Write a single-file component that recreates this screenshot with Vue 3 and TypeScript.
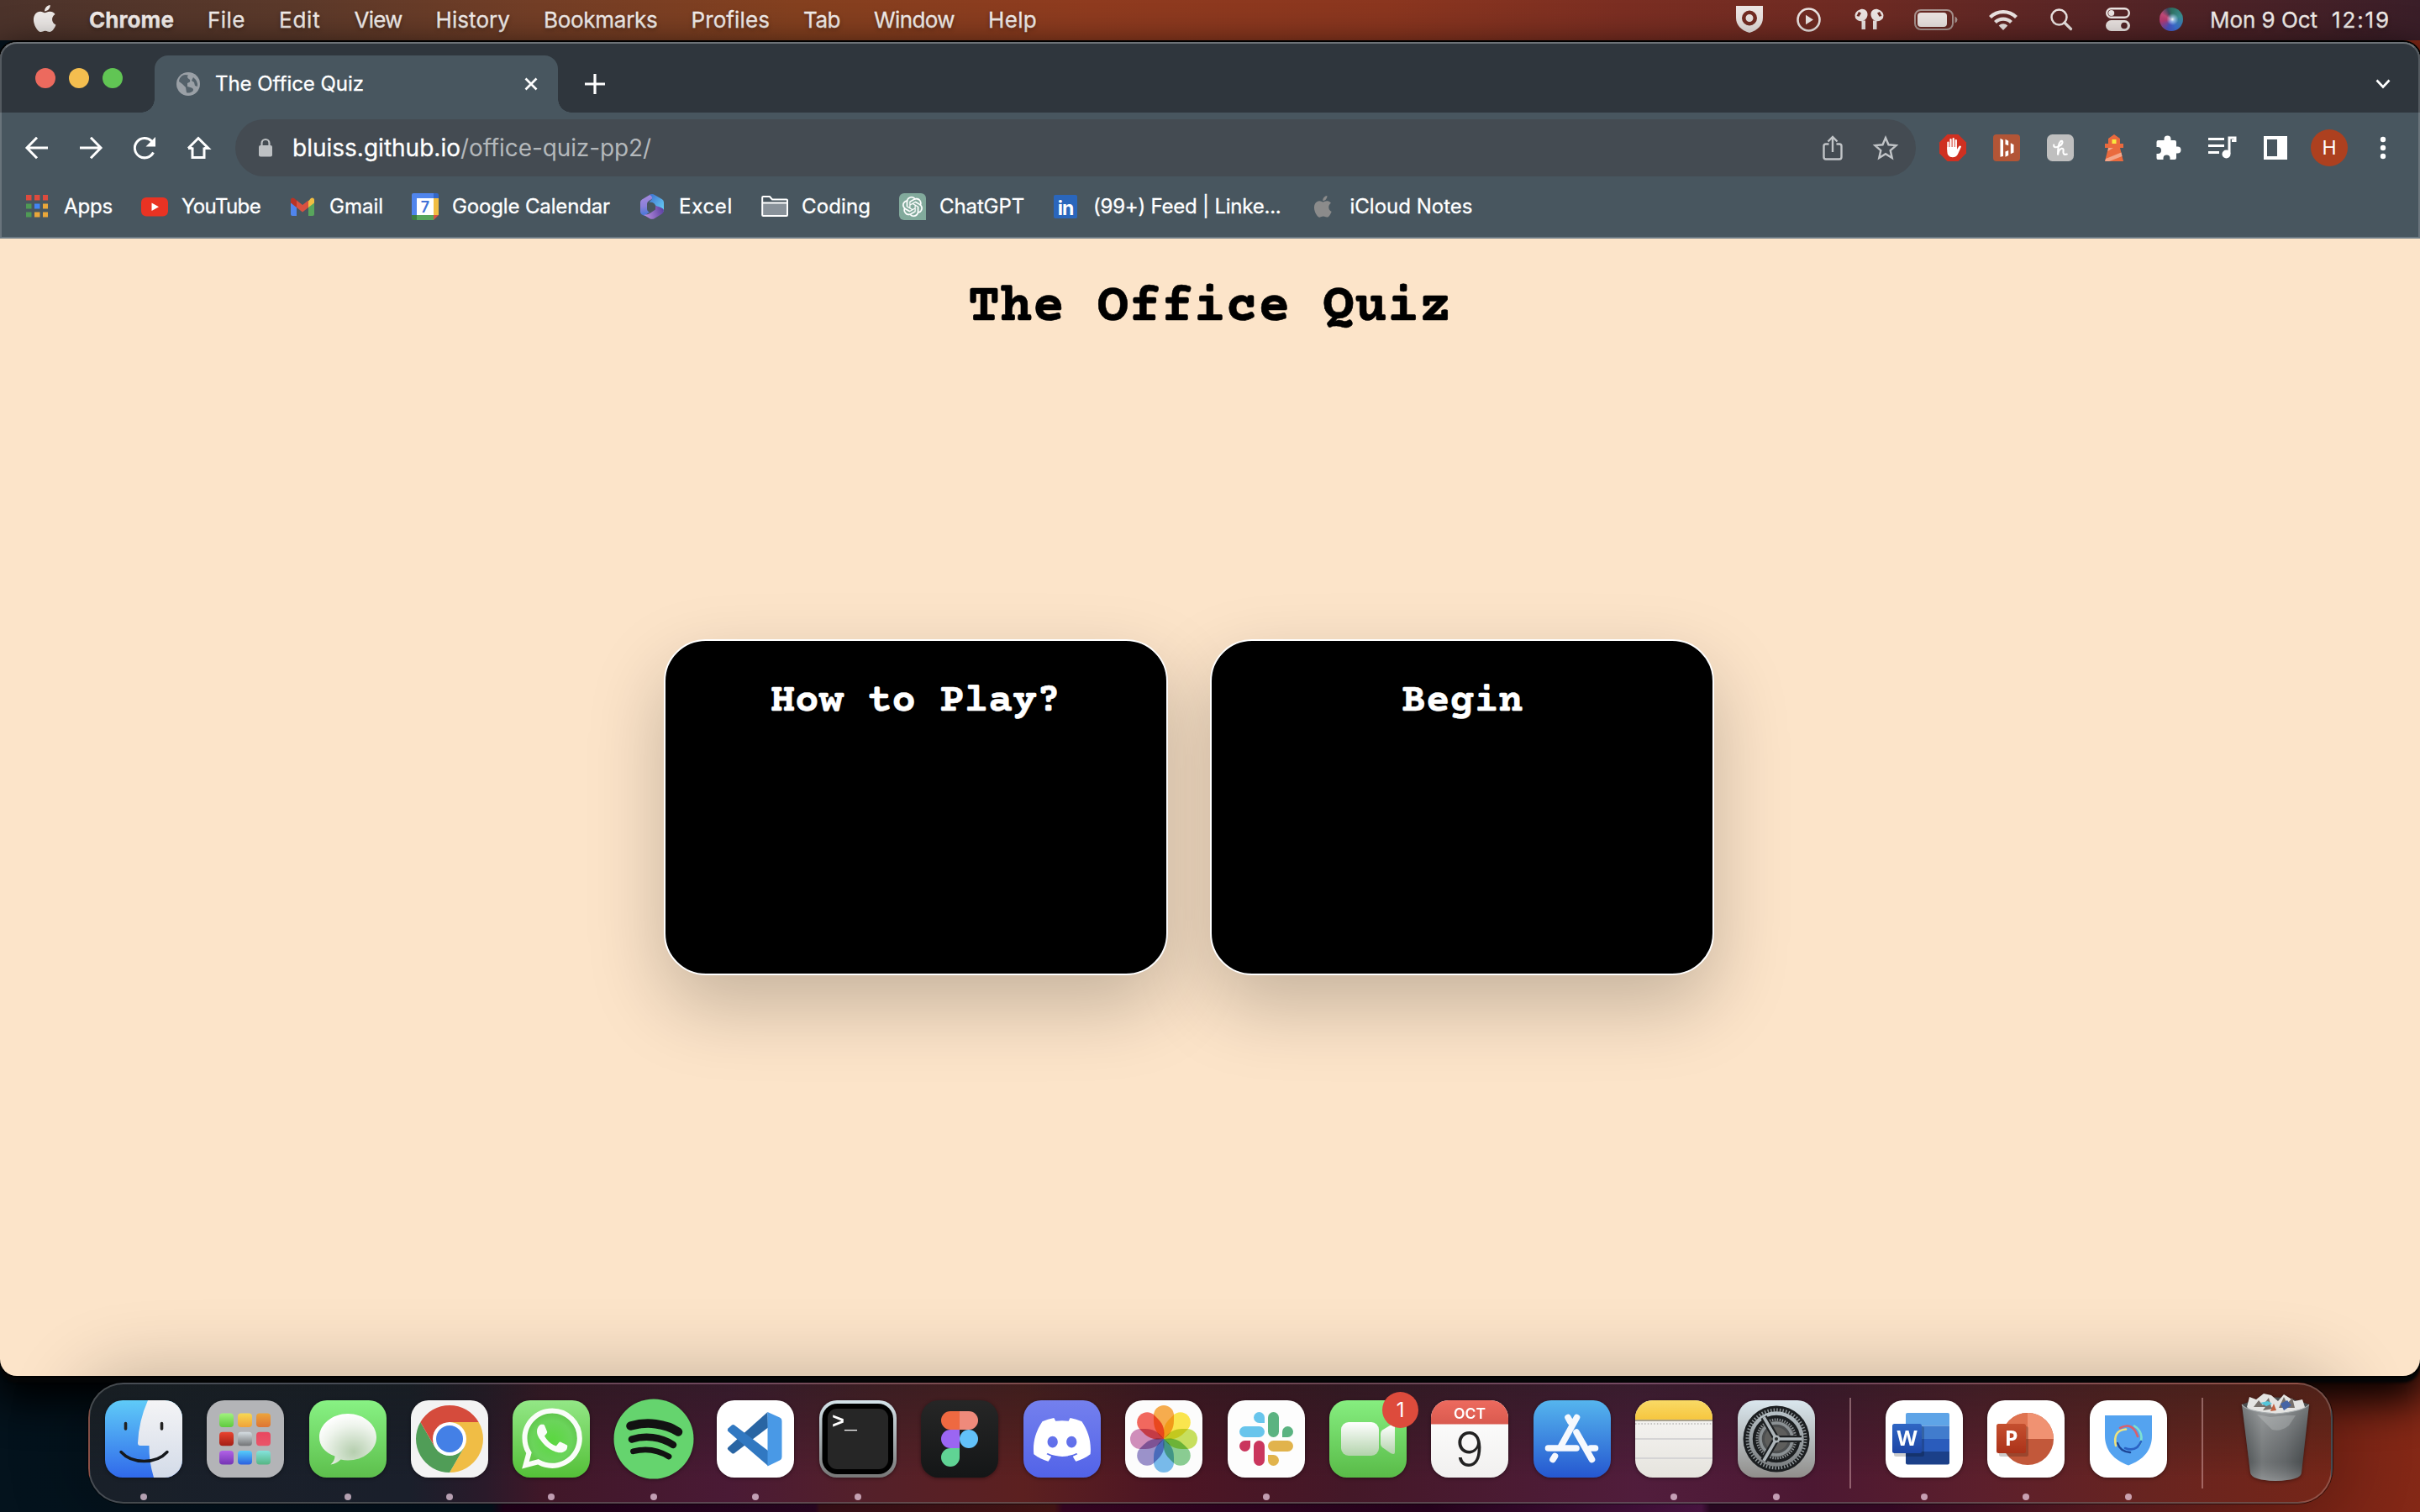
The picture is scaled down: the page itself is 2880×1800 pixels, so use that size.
<script setup lang="ts">
interface Label { text: string; width: number }
interface Bookmark extends Label { icon: string }
interface DockApp { name: string; art: string; running?: boolean; badge?: string }

/* Tracks a label out or in so that it fills the given width. */
const vFit = {
  mounted(el: HTMLElement, binding: { value: number }) {
    const count = (el.textContent ?? '').length || 1
    const natural = el.getBoundingClientRect().width
    el.style.letterSpacing = (binding.value - natural) / count + 'px'
  },
}

const menus: Label[] = [
  { text: 'File', width: 45 },
  { text: 'Edit', width: 49.5 },
  { text: 'View', width: 57 },
  { text: 'History', width: 88.5 },
  { text: 'Bookmarks', width: 135.5 },
  { text: 'Profiles', width: 93.5 },
  { text: 'Tab', width: 44 },
  { text: 'Window', width: 96 },
  { text: 'Help', width: 58 },
]

const apple = 'M18.71 19.5c-.83 1.24-1.71 2.45-3.05 2.47-1.34.03-1.77-.79-3.29-.79-1.53 0-2 .77-3.27.82-1.31.05-2.3-1.32-3.14-2.53C4.25 17 2.94 12.45 4.7 9.39c.87-1.52 2.43-2.48 4.12-2.51 1.28-.02 2.5.87 3.29.87.78 0 2.26-1.07 3.81-.91.65.03 2.47.26 3.64 1.98-.09.06-2.17 1.28-2.15 3.81.03 3.02 2.65 4.03 2.68 4.04-.03.07-.42 1.44-1.38 2.83M13 3.5c.73-.83 1.94-1.46 2.94-1.5.13 1.17-.34 2.35-1.04 3.19-.69.85-1.83 1.51-2.95 1.42-.15-1.15.41-2.35 1.05-3.11z'

const knot = 'M22.2819 9.8211a5.9847 5.9847 0 0 0-.5157-4.9108 6.0462 6.0462 0 0 0-6.5098-2.9A6.0651 6.0651 0 0 0 4.9807 4.1818a5.9847 5.9847 0 0 0-3.9977 2.9 6.0462 6.0462 0 0 0 .7427 7.0966 5.98 5.98 0 0 0 .511 4.9107 6.051 6.051 0 0 0 6.5146 2.9001A5.9847 5.9847 0 0 0 13.2599 24a6.0557 6.0557 0 0 0 5.7718-4.2058 5.9894 5.9894 0 0 0 3.9977-2.9001 6.0557 6.0557 0 0 0-.7475-7.0729zm-9.022 12.6081a4.4755 4.4755 0 0 1-2.8764-1.0408l.1419-.0804 4.7783-2.7582a.7948.7948 0 0 0 .3927-.6813v-6.7369l2.02 1.1686a.071.071 0 0 1 .038.052v5.5826a4.504 4.504 0 0 1-4.4945 4.4944zm-9.6607-4.1254a4.4708 4.4708 0 0 1-.5346-3.0137l.142.0852 4.783 2.7582a.7712.7712 0 0 0 .7806 0l5.8428-3.3685v2.3324a.0804.0804 0 0 1-.0332.0615L9.74 19.9502a4.4992 4.4992 0 0 1-6.1408-1.6464zM2.3408 7.8956a4.485 4.485 0 0 1 2.3655-1.9728V11.6a.7664.7664 0 0 0 .3879.6765l5.8144 3.3543-2.0201 1.1685a.0757.0757 0 0 1-.071 0l-4.8303-2.7865A4.504 4.504 0 0 1 2.3408 7.872zm16.5963 3.8558L13.1038 8.364 15.1192 7.2a.0757.0757 0 0 1 .071 0l4.8303 2.7913a4.4944 4.4944 0 0 1-.6765 8.1042v-5.6772a.79.79 0 0 0-.407-.667zm2.0107-3.0231l-.142-.0852-4.7735-2.7818a.7759.7759 0 0 0-.7854 0L9.409 9.2297V6.8974a.0662.0662 0 0 1 .0284-.0615l4.8303-2.7866a4.4992 4.4992 0 0 1 6.6802 4.66zM8.3065 12.863l-2.02-1.1638a.0804.0804 0 0 1-.038-.0567V6.0742a4.4992 4.4992 0 0 1 7.3757-3.4537l-.142.0805L8.704 5.459a.7948.7948 0 0 0-.3927.6813zm1.0976-2.3654l2.602-1.4998 2.6069 1.4998v2.9994l-2.5974 1.4997-2.6067-1.4997Z'

const bookmarks: Bookmark[] = [
  { text: 'Apps', width: 58, icon: '<g fill="#dd4b3e"><path d="M3 2h6.500v6.500H3zM13 2h6.500v6.500H13zM23 2h6v6.500h-6z"/></g><path d="M3 12.500h6.500v6H3z" fill="#4f9a55"/><path d="M13 12.500h6.500v6H13z" fill="#4285f4"/><path d="M23 12.500h6v6h-6zM13 22.500h6.500v6H13zM23 22.500h6v6h-6z" fill="#eaa73a"/><path d="M3 22.500h6.500v6H3z" fill="#4f9a55"/>' },
  { text: 'YouTube', width: 94, icon: '<rect y="5" width="32" height="22.500" rx="6" fill="#e93323"/><path d="M12.500 11.500v9.500l8.500-4.750z" fill="#fff"/>' },
  { text: 'Gmail', width: 64, icon: '<path d="M2 9v16a2 2 0 0 0 2 2h5V14z" fill="#5085ed"/><path d="M30 9v16a2 2 0 0 1-2 2h-5V14z" fill="#58a55c"/><path d="M23 9.500L26 6c2-1.500 4 0 4 2v3.500L23 17z" fill="#f1bd42"/><path d="M2 8c0-2 2-3.500 4-2l3 2.500V17l-7-5.500z" fill="#b83326"/><path d="M9 8.500l7 5.500 7-5.500V17l-7 5.500L9 17z" fill="#d85140"/>' },
  { text: 'Google Calendar', width: 188, icon: '<path d="M2 0h24v6H0V2q0-2 2-2z" fill="#5085ed"/><path d="M0 6h6v20H0z" fill="#5085ed"/><path d="M26 0h4q2 0 2 2v4h-6z" fill="#3367c8"/><path d="M26 6h6v20h-6z" fill="#f1bd42"/><path d="M0 26h6v6H2q-2 0-2-2z" fill="#3a7d42"/><path d="M6 26h20v6H6z" fill="#58a55c"/><path d="M26 26h6l-6 6z" fill="#d85140"/><path d="M6 6h20v20H6z" fill="#fff"/><text x="16" y="22.500" text-anchor="middle" font-family="Inter, sans-serif" font-size="18" font-weight="600" fill="#4272d7">7</text>' },
  { text: 'Excel', width: 64, icon: '<defs><linearGradient id="xl" x1=".3" y1="0" x2=".4" y2="1"><stop stop-color="#a78ae0"/><stop offset=".55" stop-color="#8a80d8"/><stop offset="1" stop-color="#3f76d8"/></linearGradient><linearGradient id="xt" x1="0" y1="0" x2="1" y2="1"><stop stop-color="#3d6fd0"/><stop offset="1" stop-color="#68d4f6"/></linearGradient><linearGradient id="xb" x1="0" y1=".5" x2="1" y2=".3"><stop stop-color="#b78ee0"/><stop offset="1" stop-color="#5b3fa0"/></linearGradient></defs><path d="M14 1.500L4 7.500Q2 8.700 2 11v11q0 2.500 2 3.500l3 1.500 6-4.500q-3-1-3-4V13q0-3 4-5l4-3z" fill="url(#xl)"/><path d="M13 2q3-2 6 0l9 5.300q2 1.200 2 3.700v11L20 14.500Q18 10 12.500 11q1-2 3-3.500 2-3-2.500-5.500z" fill="url(#xt)"/><path d="M30 20q0 3-2 4.500l-9 5.500q-3 1.700-6 0l-7-4.200q5 .2 8-2.300l6-4V15q9 2 10 5z" fill="url(#xb)"/>' },
  { text: 'Coding', width: 82, icon: '<path d="M2 11h28v16H2z" fill="#89929a"/><path d="M2 9h28v3H2z" fill="#48565f"/><path d="M1.200 5q0-1 1-1H10l3 3.500h17q1 0 1 1V26q0 1-1 1H2.200q-1 0-1-1zM1.200 11.500h29.600" fill="none" stroke="#fff" stroke-width="2"/>' },
  { text: 'ChatGPT', width: 101, icon: '<path d="M6 0h20a6 6 0 0 1 6 6v26H6a6 6 0 0 1-6-6V6a6 6 0 0 1 6-6z" fill="#82aa9c"/><path transform="translate(4 4)" fill="#fff" stroke="#fff" stroke-width=".2" d="' + knot + '"/>' },
  { text: '(99+) Feed | Linke...', width: 223.5, icon: '<rect x="1" y="2" width="28" height="28" rx="2" fill="#2a66bc"/><text x="15" y="26" text-anchor="middle" font-family="Inter, sans-serif" font-size="23" font-weight="700" letter-spacing="-1" fill="#fff">in</text>' },
  { text: 'iCloud Notes', width: 146, icon: '<path transform="translate(0 .500) scale(1.280)" fill="#8b8b8b" d="' + apple + '"/>' },
]

const squircle = (fill: string, extra = ''): string =>
  `<rect width="92" height="92" rx="21" fill="${fill}" ${extra}/>`

const grad = (id: string, a: string, b: string): string =>
  `<linearGradient id="${id}" x1="0" y1="0" x2="0" y2="1"><stop stop-color="${a}"/><stop offset="1" stop-color="${b}"/></linearGradient>`

const padColors: [string, string][] = [
  ['#a0f27e', '#5fca3f'], ['#f8d851', '#efa23a'], ['#eda43a', '#dd7434'],
  ['#e9432f', '#a31f16'], ['#d5dde2', '#727476'], ['#e9475f', '#e9556a'],
  ['#b162e6', '#7434b4'], ['#55ccfb', '#2b5fe0'], ['#84e3dc', '#55b583'],
]
const launchpad = padColors.map(([a, b], i) =>
  `${grad('pad' + i, a, b)}<rect x="${15 + (i % 3) * 22}" y="${15.5 + Math.floor(i / 3) * 22.3}" width="17" height="16.500" rx="4" fill="url(#pad${i})"/>`).join('')

const petals = ['#f5a53f', '#fae33f', '#c2dc50', '#80c889', '#6db4e8', '#9289c6', '#cb84b4', '#f05b50']
  .map((c, i) => `<path transform="rotate(${i * 45} 46 46)" d="M46 46C38 40 34 34 34 24V18a12 12 0 0 1 24 0V24C58 34 54 40 46 46z" fill="${c}" fill-opacity=".92" style="mix-blend-mode:multiply"/>`).join('')

const whatsapp = 'M17.472 14.382c-.297-.149-1.758-.867-2.03-.967-.273-.099-.471-.148-.67.15-.197.297-.767.966-.94 1.164-.173.199-.347.223-.644.075-.297-.15-1.255-.463-2.39-1.475-.883-.788-1.48-1.761-1.653-2.059-.173-.297-.018-.458.13-.606.134-.133.298-.347.446-.52.149-.174.198-.298.298-.497.099-.198.05-.371-.025-.52-.075-.149-.669-1.612-.916-2.207-.242-.579-.487-.5-.669-.51-.173-.008-.371-.01-.57-.01-.198 0-.52.074-.792.372-.272.297-1.04 1.016-1.04 2.479 0 1.462 1.065 2.875 1.213 3.074.149.198 2.096 3.2 5.077 4.487.709.306 1.262.489 1.694.625.712.227 1.36.195 1.871.118.571-.085 1.758-.719 2.006-1.413.248-.694.248-1.289.173-1.413-.074-.124-.272-.198-.57-.347m-5.421 7.403h-.004a9.87 9.87 0 01-5.031-1.378l-.361-.214-3.741.982.998-3.648-.235-.374a9.86 9.86 0 01-1.51-5.26c.001-5.45 4.436-9.884 9.888-9.884 2.64 0 5.122 1.03 6.988 2.898a9.825 9.825 0 012.893 6.994c-.003 5.45-4.437 9.884-9.885 9.884m8.413-18.297A11.815 11.815 0 0012.05 0C5.495 0 .16 5.335.157 11.892c0 2.096.547 4.142 1.588 5.945L.057 24l6.305-1.654a11.882 11.882 0 005.683 1.448h.005c6.554 0 11.89-5.335 11.893-11.893a11.821 11.821 0 00-3.48-8.413Z'

const discord = 'M20.317 4.3698a19.7913 19.7913 0 00-4.8851-1.5152.0741.0741 0 00-.0785.0371c-.211.3753-.4447.8648-.6083 1.2495-1.8447-.2762-3.68-.2762-5.4868 0-.1636-.3933-.4058-.8742-.6177-1.2495a.077.077 0 00-.0785-.037 19.7363 19.7363 0 00-4.8852 1.515.0699.0699 0 00-.0321.0277C.5334 9.0458-.319 13.5799.0992 18.0578a.0824.0824 0 00.0312.0561c2.0528 1.5076 4.0413 2.4228 5.9929 3.0294a.0777.0777 0 00.0842-.0276c.4616-.6304.8731-1.2952 1.226-1.9942a.076.076 0 00-.0416-.1057c-.6528-.2476-1.2743-.5495-1.8722-.8923a.077.077 0 01-.0076-.1277c.1258-.0943.2517-.1923.3718-.2914a.0743.0743 0 01.0776-.0105c3.9278 1.7933 8.18 1.7933 12.0614 0a.0739.0739 0 01.0785.0095c.1202.099.246.1981.3728.2924a.077.077 0 01-.0066.1276 12.2986 12.2986 0 01-1.873.8914.0766.0766 0 00-.0407.1067c.3604.698.7719 1.3628 1.225 1.9932a.076.076 0 00.0842.0286c1.961-.6067 3.9495-1.5219 6.0023-3.0294a.077.077 0 00.0313-.0552c.5004-5.177-.8382-9.6739-3.5485-13.6604a.061.061 0 00-.0312-.0286zM8.02 15.3312c-1.1825 0-2.1569-1.0857-2.1569-2.419 0-1.3332.9555-2.4189 2.157-2.4189 1.2108 0 2.1757 1.0952 2.1568 2.419 0 1.3332-.9555 2.4189-2.1569 2.4189zm7.9748 0c-1.1825 0-2.1569-1.0857-2.1569-2.419 0-1.3332.9554-2.4189 2.1569-2.4189 1.2108 0 2.1757 1.0952 2.1568 2.419 0 1.3332-.946 2.4189-2.1568 2.4189Z'

const dockApps: DockApp[] = [
  { name: 'finder', running: true, art: grad('fb', '#5fcbf8', '#3069ea') + grad('fw', '#f4f4f6', '#d3dbe8')
    + '<clipPath id="fc"><rect width="92" height="92" rx="21"/></clipPath><g clip-path="url(#fc)"><path d="M0 0h92v92H0z" fill="url(#fb)"/><path d="M51 0Q40 25 39 51q0 3 3 3h10.500Q52 72 58 92h34V0z" fill="url(#fw)"/></g><path d="M24.500 27.500v6.500M67.500 27.500v6.500" stroke="#222" stroke-width="3.600" stroke-linecap="round"/><path d="M19 61.500Q29 72.500 46.500 72.500T74 61.500" fill="none" stroke="#15181c" stroke-width="3.400" stroke-linecap="round"/>' },
  { name: 'launchpad', art: squircle('#b3b4b7') + launchpad },
  { name: 'messages', running: true, art: grad('ms', '#88f284', '#5dbf4c') + '<radialGradient id="mb" cx=".6" cy=".75" r=".75"><stop stop-color="#b5ceae"/><stop offset=".7" stop-color="#eef4ec"/><stop offset="1" stop-color="#fff"/></radialGradient>' + squircle('url(#ms)') + '<path d="M46 16c18.500 0 34 12.500 34 28S64.500 71.500 46 71.500q-4.500 0-8.500-1-5 5-12 6 5-4.500 5-10C18 62 12 54 12 44c0-15.500 15.500-28 34-28z" fill="url(#mb)"/>' },
  { name: 'chrome', running: true, art: squircle('#f3f3f3') + '<path d="M80.640 26A40 40 0 0 1 46 86L63.320 56L46 26z" fill="#f0bd45"/><path d="M11.360 26A40 40 0 0 0 46 86L63.320 56H28.680z" fill="#509d57"/><path d="M80.640 26A40 40 0 0 0 11.360 26L28.680 56L46 26z" fill="#d54b3c"/><circle cx="46" cy="46" r="20" fill="#fff"/><circle cx="46" cy="46" r="16" fill="#4480e6"/>' },
  { name: 'whatsapp', running: true, art: '<radialGradient id="wg" cy=".55" r=".65"><stop stop-color="#5ad83f"/><stop offset=".6" stop-color="#6bd45b"/><stop offset="1" stop-color="#58bd43"/></radialGradient>' + grad('wl', '#93e786', '#54c038') + squircle('url(#wl)') + '<circle cx="47" cy="45" r="30" fill="url(#wg)"/><path transform="translate(11 9.500) scale(3)" fill="#fafdf9" d="' + whatsapp + '"/>' },
  { name: 'spotify', running: true, art: '<circle cx="46" cy="46" r="47.500" fill="#65d46e"/><g fill="none" stroke="#121212" stroke-linecap="round"><path d="M18.500 30.500C38 25 60 27.500 75 37.500" stroke-width="10.500"/><path d="M20 46.500C36 41.500 54 43.500 69 53" stroke-width="8.500"/><path d="M21.500 60.800C36 57 51 59 64 67" stroke-width="6.800"/></g>' },
  { name: 'vscode', running: true, art: squircle('#fff') + '<path d="M60.500 14L13.500 56q-1.500 1.500 0 3l4.500 4q1.500 1 3 0L61 32.500z" fill="#2965a3"/><path d="M13.500 33.500l4.500-4q1.500-1 3 0L61 60v18L13.500 37q-1.500-1.500 0-3.500z" fill="#3178c1"/><path d="M60.500 14L75 20.500q2.500 1.200 2.500 4v43q0 3-2.500 4L60.500 78.500z" fill="#4999e6"/>' },
  { name: 'terminal', running: true, art: grad('tf', '#d4e3ea', '#777') + squircle('url(#tf)') + '<rect x="3.500" y="4" width="84.500" height="84" rx="18" fill="#000"/><rect x="10" y="10" width="72" height="72" rx="11" fill="#262626"/><text x="15" y="32.500" font-family="Liberation Mono, monospace" font-weight="700" font-size="25" fill="#fff">&gt;_</text>' },
  { name: 'figma', art: grad('fg', '#262626', '#141617') + squircle('url(#fg)') + '<path d="M46 13H35a11 11 0 0 0 0 22h11z" fill="#ee6941"/><path d="M46 13h11a11 11 0 0 1 0 22H46z" fill="#ef8a7b"/><path d="M46 35H35a11 11 0 0 0 0 22h11z" fill="#9b66f2"/><circle cx="57" cy="46" r="11" fill="#62c1f9"/><path d="M46 57H35a11 11 0 1 0 11 11z" fill="#60d394"/>' },
  { name: 'discord', art: grad('dg', '#7480ee', '#5263e8') + squircle('url(#dg)') + '<path transform="translate(12 13) scale(2.830)" fill="#fff" d="' + discord + '"/>' },
  { name: 'photos', art: squircle('#fcfcfc') + '<g style="isolation:isolate">' + petals + '</g>' },
  { name: 'slack', running: true, art: squircle('#fdfdfd') + '<g fill="#68c5ec"><rect x="14" y="31" width="30" height="13" rx="6.500"/><path d="M44 27h-6.500a6.500 6.500 0 1 1 6.500-6.500z"/></g><g fill="#5bb381"><rect x="48" y="14" width="13" height="30" rx="6.500"/><path d="M65 44v-6.500a6.500 6.500 0 1 1 6.500 6.500z"/></g><g fill="#ca365d"><rect x="31" y="48" width="13" height="30" rx="6.500"/><path d="M27 48v6.500A6.500 6.500 0 1 1 20.500 48z"/></g><g fill="#e1b34c"><rect x="48" y="48" width="30" height="13" rx="6.500"/><path d="M48 65h6.500a6.500 6.500 0 1 1-6.500 6.500z"/></g>' },
  { name: 'facetime', badge: '1', art: grad('ft', '#86ee80', '#59bb48') + grad('fv', '#ffffff', '#b3d3ac') + squircle('url(#ft)') + '<rect x="14" y="26" width="45" height="40" rx="9" fill="url(#fv)"/><path d="M61 40q0-3 2-4.500l10-6q5-2 5 1.500v31q0 3.500-5 1L63 56q-2-1.500-2-4z" fill="url(#fv)"/>' },
  { name: 'calendar', art: '<clipPath id="cc"><rect width="92" height="92" rx="21"/></clipPath>' + grad('cr', '#ed6a5e', '#d95a4f') + grad('cw', '#ffffff', '#f1f0ef') + '<g clip-path="url(#cc)"><path d="M0 0h92v92H0z" fill="url(#cw)"/><path d="M0 0h92v28.500H0z" fill="url(#cr)"/></g><text x="46" y="22" text-anchor="middle" font-family="Inter, sans-serif" font-size="17.500" font-weight="600" fill="#fff">OCT</text><text x="46" y="78.500" text-anchor="middle" font-family="Inter, sans-serif" font-size="57" font-weight="300" fill="#222">9</text>' },
  { name: 'appstore', art: grad('as', '#55b5ee', '#2557d0') + squircle('url(#as)') + '<g fill="none" stroke="#f6f9fe" stroke-width="7.600" stroke-linecap="round"><path d="M17.500 57H51M73.500 57H68"/><path d="M51.500 20.500L33 54M41 20.500l3 5.500"/><path d="M25.500 66.500L23 70.500"/><path d="M51 38l18.500 32.500"/></g>' },
  { name: 'notes', running: true, art: '<clipPath id="nc"><rect width="92" height="92" rx="21"/></clipPath>' + grad('ny', '#f9da66', '#f6c63f') + grad('nw', '#f8f7f6', '#e6e4de') + '<g clip-path="url(#nc)"><path d="M0 0h92v92H0z" fill="url(#nw)"/><path d="M0 0h92v23H0z" fill="url(#ny)"/><path d="M0 24h92" stroke="#a9a18c" stroke-width="2"/><path d="M0 28h92" stroke="#c4c3c1" stroke-width="2" stroke-dasharray="1.500 2.200"/><path d="M0 46h92M0 69h92" stroke="#d5d4d5" stroke-width="2"/></g>' },
  { name: 'settings', running: true, art: grad('st', '#dae7ee', '#908e8b') + grad('sr', '#b5bfc4', '#7e8284') + squircle('url(#st)') + '<circle cx="46" cy="46" r="39.500" fill="#1b1e20"/><circle cx="46" cy="46" r="34.500" fill="none" stroke="#8f9699" stroke-width="4" stroke-dasharray="1.500 2.112"/><circle cx="46" cy="46" r="30.500" fill="none" stroke="url(#sr)" stroke-width="4.500"/><circle cx="46" cy="46" r="22" fill="#4c4e4f"/><circle cx="46" cy="46" r="23" fill="none" stroke="#8c9194" stroke-width="3" stroke-dasharray="1.500 1.511"/><circle cx="46" cy="46" r="19" fill="none" stroke="#8b9194" stroke-width="3.500"/><circle cx="46" cy="46" r="14" fill="#5e5e5c"/><path d="M46 46H76M46 46L31 20M46 46L31 72" stroke="#1c1f21" stroke-width="8"/><path d="M46 46H76M46 46L31 20M46 46L31 72" stroke="#adb5b9" stroke-width="3.600"/><circle cx="46" cy="46" r="4.500" fill="#adb5b9"/><circle cx="46" cy="46" r="2" fill="#2a2d2f"/>' },
]

const officeApps: DockApp[] = [
  { name: 'word', running: true, art: squircle('#fff') + '<path d="M26 15h48q2 0 2 2v13.500H24V17q0-2 2-2z" fill="#5ea4e7"/><path d="M24 30.500h52V46H24z" fill="#417ccd"/><path d="M24 46h52v15H24z" fill="#2a5cbc"/><path d="M24 61h52v13.500q0 2-2 2H26q-2 0-2-2z" fill="#1b4089"/><rect x="10" y="31" width="36" height="36" rx="2.500" fill="#000" opacity=".2"/>' + grad('wb', '#2f66c4', '#1d45a5') + '<rect x="8" y="28" width="35" height="35" rx="2.500" fill="url(#wb)"/><text x="25.500" y="54" text-anchor="middle" font-family="Open Sans, sans-serif" font-size="25" font-weight="700" fill="#fff">W</text>' },
  { name: 'powerpoint', running: true, art: squircle('#fff') + '<circle cx="48" cy="46" r="31" fill="#c2583a"/><path d="M48 15a31 31 0 0 1 31 31H48z" fill="#f09272"/><path d="M48 15a31 31 0 0 0-31 31h31z" fill="#df7350"/><rect x="14" y="31" width="35" height="36" rx="2.500" fill="#000" opacity=".2"/>' + grad('pb', '#c5502f', '#ab3219') + '<rect x="11" y="28" width="35" height="35" rx="2.500" fill="url(#pb)"/><text x="28.500" y="54" text-anchor="middle" font-family="Open Sans, sans-serif" font-size="25" font-weight="700" fill="#fff">P</text>' },
  { name: 'hotspot', running: true, art: squircle('#fff') + '<path d="M18 18h56v24c0 17-10 29-28 35.500C28 71 18 59 18 42z" fill="#54a3f0"/><g fill="none" stroke-width="2.600" stroke-linecap="round"><path d="M36 33Q51 25 57 43" stroke="#d9606c"/><path d="M53 30.500Q66 39 59 54" stroke="#7ce0d2"/><path d="M61 49Q56 62 42 57" stroke="#2a62c4"/><path d="M33 51Q36 61 48 62" stroke="#1d4696"/><path d="M31 54Q27 36 43 34.500" stroke="#eee27e"/></g>' },
]

const trash: string = '<linearGradient id="tg"><stop stop-color="#555b5e"/><stop offset=".3" stop-color="#8e9395"/><stop offset=".65" stop-color="#777c7f"/><stop offset="1" stop-color="#4c5255"/></linearGradient><linearGradient id="td" x1="0" y1="0" x2="0" y2="1"><stop stop-color="#bcbcbc" stop-opacity=".35"/><stop offset=".75" stop-color="#222" stop-opacity=".25"/><stop offset="1" stop-color="#999" stop-opacity=".4"/></linearGradient><path d="M6 5Q46-12 86 5L84 15H8z" fill="#4c4f51"/><path d="M12 8l3-12 8 3 9-7 9 2 8 7 7-8 8 5 5 3 9-2 4 12-10 6H20z" fill="#e4e4e2"/><path d="M20 8l6-8 5 6 7-9 3 11zM50 9l6-13 4 8 6-7 3 12zM31 12l5-7 8 5z" fill="#77706b"/><path d="M28 3l9-2 5 3-7 3z" fill="#54c6da"/><path d="M52 4l8-4 5 6-9 6z" fill="#4464a5"/><path d="M40 13l4-9 3 8z" fill="#c0603f"/><path d="M6 5q4 8 40 11Q80 13 86 5l-9 81q0 9-31 10-29-1-30-10z" fill="url(#tg)"/><path d="M6 5q4 8 40 11Q80 13 86 5l-9 81q0 9-31 10-29-1-30-10z" fill="url(#td)"/><path d="M24 17l16 3 18-2 12 0-8 12q-10 8-20 5z" fill="#d5d8d9" opacity=".28"/><path d="M6 5q4 8 40 11Q80 13 86 5" fill="none" stroke="#a8adaf" stroke-width="1.200"/>'
</script>

<template>
  <div class="desktop">
    <header class="menubar">
      <svg class="apple" viewBox="3.9 2 15.9 20" preserveAspectRatio="none"><path :d="apple" /></svg>
      <nav class="menus">
        <span class="app-name" v-fit="101">Chrome</span>
        <span v-for="m in menus" :key="m.text" v-fit="m.width">{{ m.text }}</span>
      </nav>
      <div class="status">
        <svg width="32" height="32" viewBox="0 0 32 32"><path fill-rule="evenodd" d="M0 0h32v14c0 9-6 15-16 18C6 29 0 23 0 14zM16 5.500a9 9 0 1 0 0 18 9 9 0 0 0 0-18zm0 4.500a4.500 4.500 0 1 1 0 9 4.500 4.500 0 0 1 0-9z" /></svg>
        <svg class="s-play" width="29" height="29" viewBox="0 0 29 29"><circle cx="14.500" cy="14.500" r="13" fill="none" stroke="#ece5e3" stroke-width="2.600" /><path d="M11 8.800v11.400l9-5.700z" /></svg>
        <svg class="s-pods" width="35" height="26" viewBox="0 0 35 26"><path fill-rule="evenodd" d="M7.500 1C12 0 16 3 15.500 8q-.5 5-5.500 7-6 1-9-3.500Q-1.500 4 7.500 1zM5 4L2.500 9l3 .8L8 5.500z" /><path fill-rule="evenodd" d="M27.500 1C23 0 19 3 19.500 8q.5 5 5.500 7 6 1 9-3.500Q36.500 4 27.500 1zM30 4l2.500 5-3 .8L27 5.500z" /><path d="M8.500 14.500h4.500V25H8.500zM22 14.500h4.500V25H22z" /></svg>
        <svg class="s-batt" width="52" height="25" viewBox="0 0 52 25"><rect x="1" y="1" width="45" height="23" rx="7" fill="none" stroke="#a8938f" stroke-width="2" /><rect x="4" y="4" width="35" height="17" rx="4" /><path d="M48.500 8.500q3 1.500 3 4t-3 4z" fill="#a8938f" /></svg>
        <svg class="s-wifi" width="34" height="25" viewBox="0 0 34 25"><g fill="none" stroke="#ece5e3" stroke-width="4.200"><path d="M1.500 9.500a22 22 0 0 1 31 0" /><path d="M7.500 15.500a13.500 13.500 0 0 1 19 0" /></g><path d="M17 25l-5.300-5.600a7.500 7.500 0 0 1 10.600 0z" /></svg>
        <svg class="s-find" width="26" height="26" viewBox="0 0 26 26"><circle cx="10.500" cy="10.500" r="9" fill="none" stroke="#ece5e3" stroke-width="2.500" /><path d="M17 17l7.500 7.500" stroke="#ece5e3" stroke-width="3.200" stroke-linecap="round" /></svg>
        <svg class="s-ctrl" width="29" height="28" viewBox="0 0 29 28"><rect x="1.200" y="1.200" width="26.600" height="10.600" rx="5.300" fill="none" stroke="#ece5e3" stroke-width="2.400" /><circle cx="6.700" cy="6.500" r="3.500" /><rect y="15" width="29" height="13" rx="6.500" /><circle cx="22" cy="21.500" r="3.800" fill="#542528" /></svg>
        <i class="siri"></i>
        <span class="date" v-fit="128">Mon 9 Oct</span>
        <span v-fit="70">12:19</span>
      </div>
    </header>

    <main class="window">
      <div class="chrome">
        <div class="tabstrip">
          <div class="lights"><i class="red"></i><i class="yellow"></i><i class="green"></i></div>
          <div class="tab">
            <svg class="globe" width="28" height="28" viewBox="0 0 28 28"><circle cx="14" cy="14" r="14" fill="#9aa0a6" /><path d="M14 3.500q-2 2 0 4 3 1 2 4l-3 1.500v4l5 1.500q3 1 1.500 4L17 24q-3 1-5 .3l-1-6.300-4-4-4-3q0-4 4-7 3-1.500 7-.5zM20 6l-2 4 3 2 1 4 3 1q1-6-5-11z" fill="#48565f" opacity=".85" /></svg>
            <span v-fit="177">The Office Quiz</span>
            <svg class="close" width="16" height="16" viewBox="0 0 16 16"><path d="M1.500 1.500l13 13M14.500 1.500l-13 13" stroke="#fff" stroke-width="2.700" /></svg>
          </div>
          <svg class="plus" width="24" height="24" viewBox="0 0 24 24"><path d="M12 0v24M0 12h24" stroke="#fff" stroke-width="3.200" /></svg>
          <svg class="more-tabs" width="18" height="12" viewBox="0 0 18 12"><path d="M1.500 1.500L9 9.500l7.500-8" fill="none" stroke="#fff" stroke-width="2.600" /></svg>
        </div>

        <div class="toolbar">
          <div class="nav">
            <svg viewBox="0 0 28 28"><path d="M27 14H3M14 1.800L2 14l12 12.200" /></svg>
            <svg viewBox="0 0 28 28"><path d="M1 14h24M14 1.800L26 14 14 26.200" /></svg>
            <svg viewBox="0 0 28 28"><path d="M24.500 19.500A11.700 11.700 0 1 1 22.500 6l2 2.200" /><path d="M27 1v11.500H15.500z" class="solid" /></svg>
            <svg viewBox="0 0 28 28"><path d="M7 13.500V25.500h14V13.500M2 14.500L14 2.500l12 12H21M2 14.500h5" /></svg>
          </div>
          <div class="omnibox">
            <svg class="lock" width="16" height="22" viewBox="0 0 16 22"><path d="M3.500 9V5.500a4.500 4.500 0 0 1 9 0V9" fill="none" stroke="#bdc0c3" stroke-width="2.200" /><rect y="8" width="16" height="13.500" rx="2" fill="#bdc0c3" /></svg>
            <span class="host" v-fit="200">bluiss.github.io</span><span class="path" v-fit="227">/office-quiz-pp2/</span>
            <svg class="share" width="24" height="30" viewBox="0 0 24 30"><path d="M7.500 10.500H4q-2.500 0-2.500 2.500v13q0 2.500 2.500 2.500h16q2.500 0 2.500-2.500V13q0-2.500-2.500-2.500h-3.500M12 20V2.500M6.500 7.500L12 2l5.500 5.500" /></svg>
            <svg width="30" height="30" viewBox="0 0 30 30"><path d="M15 3l3.500 8.300 9 .8-6.800 6 2 8.800-7.700-4.700-7.700 4.700 2-8.800-6.800-6 9-.8z" /></svg>
          </div>
          <div class="extensions">
            <svg viewBox="0 0 32 32"><path d="M9.500 0h13L32 9.500v13L22.500 32h-13L0 22.500v-13z" fill="#cf3021" /><path d="M10.400 9.500V18M13.500 6v11M16.700 5.200V17M19.800 7v11" fill="none" stroke="#fff" stroke-width="2.200" stroke-linecap="round" /><path d="M9.300 15h11.600v3l2.200-3.600q1.500-1.700 3 .2L22 23.500Q20.500 27.200 15.700 27.200q-6.400-.4-6.400-7z" fill="#fff" /></svg>
            <svg viewBox="0 0 32 32"><rect width="32" height="32" rx="4" fill="#b25536" /><path d="M8.500 4.800l3.500 2V26l-3.500.8zM14.500 5.800l3.700 2v5.500l-3.700-1.300zM14.500 20.500l3.700-1.500v6l-3.700 1.700zM20.800 10.300l3.700 2V21.500l-3.700 1.800z" fill="#fff" /></svg>
            <svg viewBox="0 0 32 32"><rect width="32" height="32" rx="6.500" fill="#bfbfbf" /><path d="M8.200 12.500Q8 16 12 15q6-2 6.500-5.500Q18.500 7 16.500 8 13 11 13 24.500 14 17.500 17.500 16.700q2.800-.2 2 3.300-.8 5 4.300 3.500" fill="none" stroke="#fff" stroke-width="2.100" stroke-linecap="round" /></svg>
            <svg viewBox="0 0 32 32"><path d="M16 0l7 5v6h4v5H5v-5h4V5z" fill="#ea6a3e" /><path d="M9 16h14l4 16H5z" fill="#ea6a3e" /><path d="M13.500 6h5v5h-5z" fill="#f8e93f" /><path d="M9 16h6l-6.500 4zM24.500 21.500L6 29l-.8 3h5L25.500 26z" fill="#f3a68a" /></svg>
            <svg viewBox="0 0 32 32"><path d="M11.500 5.500a4 4 0 0 1 8 0V7H24q2 0 2 2v5.500h1.500a4 4 0 0 1 0 8H26V28q0 2-2 2h-5.500v-1.500a4 4 0 0 0-8 0V30H4q-1.500 0-1.500-2v-5H4a4 4 0 0 0 0-8H2.500V9q0-2 2-2h7z" fill="#fff" /></svg>
            <svg viewBox="0 0 32 32"><path d="M0 5.500h19M0 13.500h19M0 21.500h13" stroke="#fff" stroke-width="3" /><path d="M25 23V4h7v3.500h-4" fill="none" stroke="#fff" stroke-width="3" /><circle cx="21.500" cy="23.500" r="5" fill="#fff" /></svg>
            <svg viewBox="0 0 32 32"><path fill-rule="evenodd" d="M2 2h28v28H2zM6 6v20h12V6z" fill="#fff" /></svg>
          </div>
          <span class="profile">H</span>
          <svg class="kebab" width="8" height="28" viewBox="0 0 8 28"><circle cx="4" cy="4" r="3.200" /><circle cx="4" cy="14" r="3.200" /><circle cx="4" cy="24" r="3.200" /></svg>
        </div>

        <div class="bookmarks">
          <a v-for="b in bookmarks" :key="b.text">
            <svg width="32" height="32" viewBox="0 0 32 32" v-html="b.icon"></svg>
            <span v-fit="b.width">{{ b.text }}</span>
          </a>
        </div>
      </div>

      <section class="page">
        <h1>The Office Quiz</h1>
        <div class="cards">
          <button class="card">How to Play?</button>
          <button class="card">Begin</button>
        </div>
      </section>
    </main>

    <footer class="dock">
      <div v-for="a in dockApps" :key="a.name" class="slot">
        <svg class="icon" viewBox="0 0 92 92" v-html="a.art"></svg>
        <i v-if="a.running" class="dot"></i>
        <b v-if="a.badge" class="badge">{{ a.badge }}</b>
      </div>
      <i class="divider"></i>
      <div v-for="a in officeApps" :key="a.name" class="slot">
        <svg class="icon" viewBox="0 0 92 92" v-html="a.art"></svg>
        <i v-if="a.running" class="dot"></i>
      </div>
      <i class="divider"></i>
      <div class="slot"><svg class="icon" viewBox="0 0 92 92" v-html="trash"></svg></div>
    </footer>
  </div>
</template>

<style>
body { margin: 0; background: #04121c; }
</style>

<style scoped>
.desktop {
  width: 2880px;
  height: 1800px;
  overflow: hidden;
  display: flex;
  flex-direction: column;
  font-family: Inter, "Liberation Sans", sans-serif;
  background: linear-gradient(90deg, #04131d 0, #04111c 585px, #22001a 600px, #2c0624 970px, #3a1018 976px, #4a1616 1255px, #3a0525 1265px, #2a0320 1700px, #501648 2025px, #2e0a26 2035px, #3a0a28 2250px, #5c1c22 2500px, #742216 2700px, #842816 2880px);
}
svg { display: block; flex: none; overflow: visible; }
span { white-space: nowrap; flex: none; }

.menubar {
  height: 48px;
  flex: none;
  display: flex;
  align-items: center;
  box-sizing: border-box;
  padding: 0 35px 2px 40px;
  color: #f3edea;
  font-size: 26px;
  font-weight: 400;
  -webkit-text-stroke: .3px currentColor;
  text-shadow: 0 2px 5px rgba(0, 0, 0, .35);
  background: linear-gradient(90deg, #4c332b 0, #5b392a 350px, #733e26 640px, #84401f 950px, #8f3b1f 1300px, #8b361f 1650px, #7b2e22 1930px, #6c2a23 2240px, #572526 2500px, #3a1e28 2880px);
}
.apple { width: 26px; height: 32px; margin-top: -2px; fill: #efebe9; }
.menus { display: flex; gap: 40px; margin-left: 40px; }
.app-name { font-weight: 700; }
.status { margin-left: auto; display: flex; align-items: center; }
.status svg { fill: #ece5e3; }
.s-play { margin-left: 40px; }
.s-pods { margin-left: 40px; }
.s-batt { margin-left: 36px; }
.s-wifi { margin-left: 37px; }
.s-find { margin-left: 39px; }
.s-ctrl { margin-left: 40px; }
.siri {
  width: 28px; height: 28px; border-radius: 50%; margin-left: 35px;
  background: radial-gradient(circle at 55% 50%, #fff 0, rgba(190, 220, 255, .7) 12%, transparent 34%), conic-gradient(from 0deg, #2e6f60, #3a8f90 70deg, #3d73d8 150deg, #4a55c8 200deg, #b53a72 260deg, #c24a78 300deg, #3a4a60 340deg, #2e6f60);
}
.date { margin-left: 32px; margin-right: 17px; }

.window {
  height: 1588px;
  margin-top: 2px;
  flex: none;
  display: flex;
  flex-direction: column;
  border-radius: 20px;
  overflow: hidden;
  background: #fce4c9;
  box-shadow: 0 0 0 2px #000, 0 8px 3px #050607, 0 22px 50px 8px #000;
}
.chrome { position: relative; height: 234px; box-sizing: border-box; border-bottom: 2px solid #6d7b85; background: #48565f; color: #fff; flex: none; }
.chrome::after { content: ""; position: absolute; inset: 0; border: 2px solid rgba(255, 255, 255, .3); border-bottom: 0; border-radius: 20px 20px 0 0; border-left-color: rgba(255, 255, 255, .18); border-right-color: rgba(255, 255, 255, .18); }
.tabstrip { height: 84px; box-sizing: border-box; padding: 16px 35px 0 42px; display: flex; align-items: center; background: #2f363d; }
.lights { display: flex; gap: 16px; margin-top: -14px; }
.lights i { width: 24px; height: 24px; border-radius: 50%; }
.red { background: #ec6a5e; }
.yellow { background: #f4be4f; }
.green { background: #61c554; }
.tab { position: relative; width: 480px; height: 68px; box-sizing: border-box; margin-left: 38px; padding: 0 24px 0 26px; display: flex; align-items: center; border-radius: 16px 16px 0 0; background: #48565f; font-size: 24px; font-weight: 400; }
.tab::before, .tab::after { content: ""; position: absolute; bottom: 0; width: 16px; height: 16px; }
.tab::before { left: -16px; background: radial-gradient(circle at 0 0, transparent 15.500px, #48565f 16px); }
.tab::after { right: -16px; background: radial-gradient(circle at 100% 0, transparent 15.500px, #48565f 16px); }
.tab span { margin-left: 18px; padding-bottom: 1px; -webkit-text-stroke: .3px #fff; }
.close { margin-left: auto; }
.plus { margin-left: 32px; }
.more-tabs { margin-left: auto; }

.toolbar { height: 84px; display: flex; align-items: center; padding: 0 40px 0 30px; }
.nav { display: flex; gap: 36px; width: 250px; }
.nav svg { width: 28px; height: 28px; fill: none; stroke: #fff; stroke-width: 3; }
.nav .solid { fill: #fff; stroke: none; }
.omnibox { width: 2000px; height: 68px; box-sizing: border-box; padding: 0 21px 0 28px; display: flex; align-items: center; border-radius: 34px; background: #444b52; font-size: 28px; }
.lock { margin-right: 24px; }
.host { -webkit-text-stroke: .3px #fff; }
.path { color: #b4b8bb; }
.share { margin-left: auto; margin-right: 36px; }
.omnibox .share, .omnibox .share ~ svg { fill: none; stroke: #c1c4c7; stroke-width: 2.400; }
.extensions { display: flex; gap: 32px; margin-left: 28px; }
.extensions svg { width: 32px; height: 32px; }
.profile { width: 44px; height: 44px; margin-left: 26px; border-radius: 50%; background: #ad401f; font-size: 23px; line-height: 45px; text-align: center; }
.kebab { margin-left: 38px; fill: #fff; }

.bookmarks { height: 56px; display: flex; align-items: center; gap: 34px; padding-left: 28px; font-size: 24px; font-weight: 400; }
.bookmarks a { display: flex; align-items: center; gap: 16px; }
.bookmarks span { padding-bottom: 2px; -webkit-text-stroke: .3px #fff; }

.page { flex: 1; display: flex; flex-direction: column; align-items: center; font-family: "Courier Prime", "Liberation Mono", monospace; font-variant-ligatures: none; }
h1 { margin: 43px 1px 0 0; height: 80px; font-size: 64px; line-height: 80px; font-weight: 700; color: #000; -webkit-text-stroke: .6px #000; }
.cards { display: flex; gap: 50px; margin: 354px 50px 0 0; }
.card { width: 600px; height: 400px; box-sizing: border-box; padding: 42px 0 0; display: flex; justify-content: center; align-items: flex-start; border: 2px solid #fff; border-radius: 50px; background: #000; color: #fff; font: inherit; font-size: 48px; line-height: 60px; font-weight: 700; -webkit-text-stroke: .5px #fff; box-shadow: 0 36px 90px rgba(0, 0, 0, .22); }

.dock {
  position: relative;
  width: 2671px;
  height: 144px;
  flex: none;
  box-sizing: border-box;
  margin: 8px 0 0 105px;
  padding-left: 3px;
  display: flex;
  border: 2px solid rgba(255, 255, 255, .2);
  border-radius: 42px;
  background:
    linear-gradient(180deg, rgba(20, 26, 24, .4), transparent 80%),
    linear-gradient(90deg, #192029 0, #1a1f2b 380px, #2a1a2a 470px, #401728 540px, #4a1a35 760px, #54202a 920px, #5c2020 1110px, #4c1524 1290px, #441828 1500px, #511d3c 1850px, #4c1832 2050px, #5c1f2c 2250px, #682420 2450px, #762618 2671px);
  box-shadow: 0 0 90px 8px rgba(0, 0, 0, .24), 0 0 0 1px rgba(0, 0, 0, .5);
}
.slot { position: relative; width: 121.450px; flex: none; display: flex; flex-direction: column; align-items: center; padding-top: 19px; box-sizing: border-box; }
.icon { width: 92px; height: 92px; filter: drop-shadow(0 1px 2px rgba(0, 0, 0, .4)); }
.dot { width: 8px; height: 8px; margin-top: 19px; border-radius: 50%; background: rgba(245, 215, 235, .7); }
.divider { width: 2px; height: 108px; margin: 16px 26px 0 26.500px; flex: none; background: rgba(255, 210, 210, .38); }
.badge { position: absolute; left: 78px; top: 9px; width: 43px; height: 43px; border-radius: 50%; background: #dd4b3c; color: #fff; font-size: 24px; font-weight: 400; line-height: 43px; text-align: center; }
</style>
